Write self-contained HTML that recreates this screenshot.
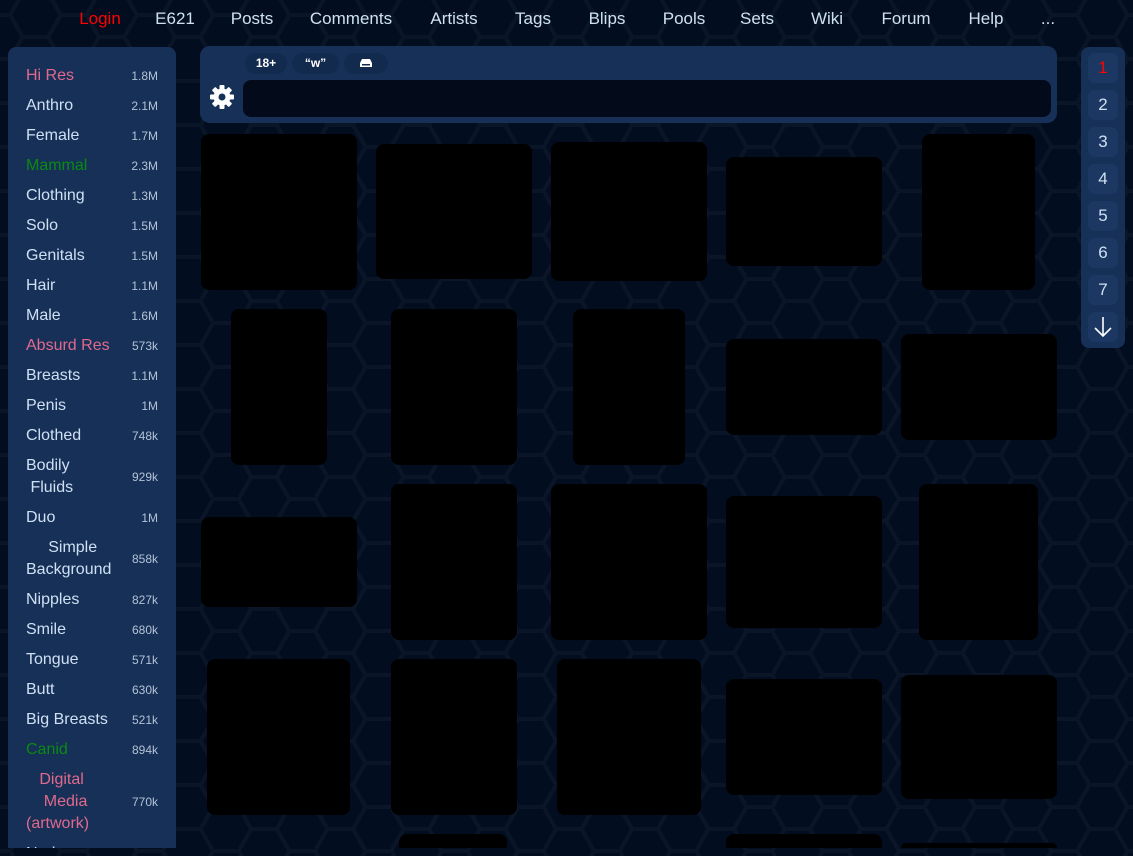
<!DOCTYPE html>
<html><head><meta charset="utf-8"><style>
*{margin:0;padding:0;box-sizing:border-box}
html{width:1133px;height:856px;overflow:hidden}
body{width:1133px;height:856px;overflow:hidden;background:#020d1f;font-family:"Liberation Sans",sans-serif;position:relative;color:#cfe0f3}
.bg{position:absolute;left:0;top:0}
.nav{position:absolute;top:9px;font-size:17px;color:#cfe0f3;transform:translateX(-50%);white-space:nowrap}
.side{position:absolute;left:8px;top:47px;width:168px;height:801px;background:#173058;border-radius:8px 8px 0 0;overflow:hidden}
.r{position:absolute;left:18px;width:132px;font-size:16px;line-height:22px}
.r .c{position:absolute;right:0;top:50%;transform:translateY(-50%);font-size:12px;color:#b4c3d6}
.pk{color:#e06a8c}.gr{color:#0a8a12}
.top{position:absolute;left:200px;top:46px;width:857px;height:77px;background:#173058;border-radius:10px}
.pill{position:absolute;top:7px;height:21px;background:#132a4f;border-radius:11px;font-size:12px;color:#fff;text-align:center;line-height:21px;font-weight:bold}
.inp{position:absolute;left:43px;top:34px;width:808px;height:37px;background:#030b1b;border-radius:8px}
.im{position:absolute;background:#000;border-radius:8px}
.pg{position:absolute;left:1081px;top:47px;width:44px;height:301px;background:#173058;border-radius:8px}
.b{position:absolute;left:7px;width:30px;height:30px;background:#1c3862;border-radius:7px;text-align:center;line-height:30px;font-size:17px;color:#cfe0f3}
</style></head><body>
<svg class="bg" width="1133" height="856"><defs><pattern id="h" width="76.2" height="44" patternUnits="userSpaceOnUse" x="10" y="-7"><path d="M0,22 L12.7,0 L38.1,0 L50.8,22 L38.1,44 L12.7,44 Z M50.8,22 L76.2,22" fill="none" stroke="#0a1628" stroke-width="4"/></pattern></defs><rect width="1133" height="856" fill="url(#h)"/></svg>
<div class="nav" style="left:100px;color:#f00">Login</div>
<div class="nav" style="left:175px">E621</div>
<div class="nav" style="left:252px">Posts</div>
<div class="nav" style="left:351px">Comments</div>
<div class="nav" style="left:454px">Artists</div>
<div class="nav" style="left:533px">Tags</div>
<div class="nav" style="left:607px">Blips</div>
<div class="nav" style="left:684px">Pools</div>
<div class="nav" style="left:757px">Sets</div>
<div class="nav" style="left:827px">Wiki</div>
<div class="nav" style="left:906px">Forum</div>
<div class="nav" style="left:986px">Help</div>
<div class="nav" style="left:1048px">...</div>

<div class="side">
<div class="r pk" style="top:18px">Hi Res<span class="c">1.8M</span></div>
<div class="r" style="top:48px">Anthro<span class="c">2.1M</span></div>
<div class="r" style="top:78px">Female<span class="c">1.7M</span></div>
<div class="r gr" style="top:108px">Mammal<span class="c">2.3M</span></div>
<div class="r" style="top:138px">Clothing<span class="c">1.3M</span></div>
<div class="r" style="top:168px">Solo<span class="c">1.5M</span></div>
<div class="r" style="top:198px">Genitals<span class="c">1.5M</span></div>
<div class="r" style="top:228px">Hair<span class="c">1.1M</span></div>
<div class="r" style="top:258px">Male<span class="c">1.6M</span></div>
<div class="r pk" style="top:288px">Absurd Res<span class="c">573k</span></div>
<div class="r" style="top:318px">Breasts<span class="c">1.1M</span></div>
<div class="r" style="top:348px">Penis<span class="c">1M</span></div>
<div class="r" style="top:378px">Clothed<span class="c">748k</span></div>
<div class="r" style="top:408px">Bodily<br>&nbsp;Fluids<span class="c">929k</span></div>
<div class="r" style="top:460px">Duo<span class="c">1M</span></div>
<div class="r" style="top:490px">&nbsp;&nbsp;&nbsp;&nbsp;&nbsp;Simple<br>Background<span class="c">858k</span></div>
<div class="r" style="top:542px">Nipples<span class="c">827k</span></div>
<div class="r" style="top:572px">Smile<span class="c">680k</span></div>
<div class="r" style="top:602px">Tongue<span class="c">571k</span></div>
<div class="r" style="top:632px">Butt<span class="c">630k</span></div>
<div class="r" style="top:662px">Big Breasts<span class="c">521k</span></div>
<div class="r gr" style="top:692px">Canid<span class="c">894k</span></div>
<div class="r pk" style="top:722px">&nbsp;&nbsp;&nbsp;Digital<br>&nbsp;&nbsp;&nbsp;&nbsp;Media<br>(artwork)<span class="c">770k</span></div>
<div class="r" style="top:796px">Nude</div>
</div>

<div class="top">
<div class="pill" style="left:45px;width:42px">18+</div>
<div class="pill" style="left:92px;width:47px">“w”</div>
<div class="pill" style="left:144px;width:44px"><svg width="14" height="10" viewBox="0 0 14 10" style="vertical-align:-1px"><path d="M3,1 H11 L13,5 V9 H1 V5 Z" fill="#fff"/><rect x="3" y="6" width="8" height="1.5" fill="#132a4f"/></svg></div>
<svg style="position:absolute;left:10px;top:39px" width="24" height="24" viewBox="0 0 24 24"><g fill="#fff" transform="translate(12 12)"><rect x="-2.5" y="-12" width="5" height="24" rx="1"/><rect x="-2.5" y="-12" width="5" height="24" rx="1" transform="rotate(45)"/><rect x="-2.5" y="-12" width="5" height="24" rx="1" transform="rotate(90)"/><rect x="-2.5" y="-12" width="5" height="24" rx="1" transform="rotate(135)"/><circle r="8.5"/></g><circle cx="12" cy="12" r="3.5" fill="#173058"/></svg>
<div class="inp"></div>
</div>

<div class="im" style="left:201px;top:134px;width:156px;height:156px"></div>
<div class="im" style="left:376px;top:144px;width:156px;height:135px"></div>
<div class="im" style="left:551px;top:142px;width:156px;height:139px"></div>
<div class="im" style="left:726px;top:157px;width:156px;height:109px"></div>
<div class="im" style="left:922px;top:134px;width:113px;height:156px"></div>
<div class="im" style="left:231px;top:309px;width:96px;height:156px"></div>
<div class="im" style="left:391px;top:309px;width:126px;height:156px"></div>
<div class="im" style="left:573px;top:309px;width:112px;height:156px"></div>
<div class="im" style="left:726px;top:339px;width:156px;height:96px"></div>
<div class="im" style="left:901px;top:334px;width:156px;height:106px"></div>
<div class="im" style="left:201px;top:517px;width:156px;height:90px"></div>
<div class="im" style="left:391px;top:484px;width:126px;height:156px"></div>
<div class="im" style="left:551px;top:484px;width:156px;height:156px"></div>
<div class="im" style="left:726px;top:496px;width:156px;height:132px"></div>
<div class="im" style="left:919px;top:484px;width:119px;height:156px"></div>
<div class="im" style="left:207px;top:659px;width:143px;height:156px"></div>
<div class="im" style="left:391px;top:659px;width:126px;height:156px"></div>
<div class="im" style="left:557px;top:659px;width:144px;height:156px"></div>
<div class="im" style="left:726px;top:679px;width:156px;height:116px"></div>
<div class="im" style="left:901px;top:675px;width:156px;height:124px"></div>
<div class="im" style="left:399px;top:834px;width:108px;height:14px;border-radius:8px 8px 0 0"></div>
<div class="im" style="left:726px;top:834px;width:156px;height:14px;border-radius:8px 8px 0 0"></div>
<div class="im" style="left:901px;top:843px;width:156px;height:5px;border-radius:8px 8px 0 0"></div>

<div class="pg">
<div class="b" style="top:6px;color:#f00">1</div>
<div class="b" style="top:43px">2</div>
<div class="b" style="top:80px">3</div>
<div class="b" style="top:117px">4</div>
<div class="b" style="top:154px">5</div>
<div class="b" style="top:191px">6</div>
<div class="b" style="top:228px">7</div>
<div class="b" style="top:265px"><svg width="20" height="22" viewBox="0 0 20 22" style="margin-top:4px"><path d="M10,1 V20 M2,12 L10,20 L18,12" fill="none" stroke="#fff" stroke-width="1.6"/></svg></div>
</div>
</body></html>
